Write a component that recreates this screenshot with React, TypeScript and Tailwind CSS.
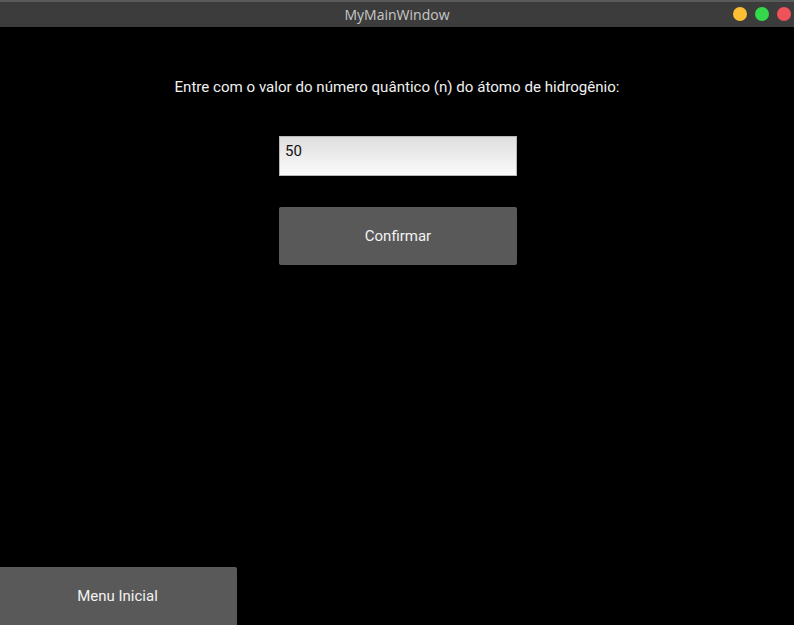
export default function App() {
  return (
    <div className="w-[794px] h-[625px] flex flex-col bg-black overflow-hidden" style={{ fontFamily: 'Roboto, "Liberation Sans", sans-serif' }}>
      {/* barra de título */}
      <div className="h-[27px] shrink-0 bg-[#3c3c3c] border-t-2 border-[#5a5a5a] flex items-center relative">
        <div className="flex-1 text-center text-[14px] text-[#c8c8c8]" style={{ fontFamily: '"Open Sans", "DejaVu Sans", sans-serif' }}>
          MyMainWindow
        </div>
        <div className="absolute right-[3px] top-[5px] flex gap-[8px]">
          <span className="w-[14px] h-[14px] rounded-full bg-[#fbbf33]" />
          <span className="w-[14px] h-[14px] rounded-full bg-[#33d94a]" />
          <span className="w-[14px] h-[14px] rounded-full bg-[#f0525a]" />
        </div>
      </div>

      <div className="flex-1 flex flex-col">
        <p className="mt-[51px] text-center text-[15.1px] text-[#f0f0f0] leading-[18px]">
          Entre com o valor do número quântico (n) do átomo de hidrogênio:
        </p>

        <div className="mt-[40px] flex justify-center pl-[2px]">
          <div className="w-[238px] h-[40px] border border-[#b8b8b8] bg-gradient-to-b from-[#dedede] to-[#fbfbfb] px-[5px] pt-[5px] text-[15px] text-[#111] leading-[18px]">
            50
          </div>
        </div>

        <div className="mt-[31px] flex justify-center pl-[2px]">
          <button className="w-[238px] h-[58px] bg-[#595959] rounded-[2px] text-[15px] text-[#f2f2f2]">
            Confirmar
          </button>
        </div>

        <div className="flex-1" />

        <button className="w-[237px] h-[58px] bg-[#595959] text-[15px] text-[#f2f2f2] rounded-tr-[2px] pr-[2px]">
          Menu Inicial
        </button>
      </div>
    </div>
  )
}
